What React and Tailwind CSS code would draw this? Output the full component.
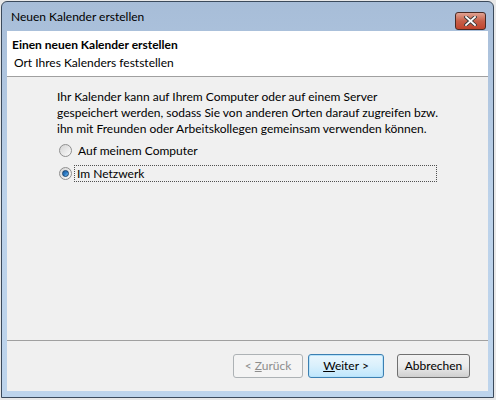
import React from 'react'

const font = { fontFamily: 'Lato, "Noto Sans", sans-serif' }

function Radio({ checked }) {
    return (
        <span className="relative w-[13px] h-[13px] rounded-full border border-[#8f8f8f] bg-gradient-to-br from-[#d4d4d4] to-[#fbfbfb] flex items-center justify-center shrink-0">
            {checked && (
                <span className="w-[7px] h-[7px] rounded-full bg-gradient-to-br from-[#1d5f9e] via-[#2b7ac6] to-[#7ec8f6] border border-[#13406e]" />
            )}
        </span>
    )
}

function Button({ children, disabled, primary }) {
    let cls = 'h-[24px] rounded-[3px] border text-[12px] flex items-center justify-center '
    if (disabled) cls += 'border-[#adb2b5] bg-[#f4f4f4] text-[#8d8d8d]'
    else if (primary) cls += 'border-[#3c7fb1] bg-gradient-to-b from-[#eaf6fd] via-[#d9f0fc] to-[#bee6fd] text-black shadow-[inset_0_0_0_1px_#b7e3fb]'
    else cls += 'border-[#707070] bg-gradient-to-b from-[#f2f2f2] via-[#ebebeb] to-[#cfcfcf] text-black'
    return <div className={cls}><span>{children}</span></div>
}

export default function App() {
    return (
        <div className="w-[496px] h-[400px] bg-[#e8e8e8] overflow-hidden" style={font}>
            <div className="ml-[1px] mt-[1px] w-[493px] h-[397px] border border-[#3b4a5c] rounded-t-[6px] bg-gradient-to-b from-[#a7bdd8] via-[#bcd2ea] to-[#bdd4ec] flex flex-col">
                {/* title bar */}
                <div className="h-[29px] flex items-start pl-[9px] pr-[7px] shrink-0">
                    <span className="text-[12px] text-black mt-[8px] leading-[14px]">Neuen Kalender erstellen</span>
                    <div className="ml-auto mt-[10px] w-[31px] h-[18px] rounded-[3px] border border-[#4a2a24] bg-gradient-to-b from-[#e0a292] via-[#c75f48] to-[#c1442c] flex items-center justify-center">
                        <svg width="13" height="10" viewBox="0 0 13 10">
                            <path d="M2 1 L11 9 M11 1 L2 9" stroke="#3a3a3a" strokeWidth="3.6" strokeLinecap="square" />
                            <path d="M2 1 L11 9 M11 1 L2 9" stroke="#ffffff" strokeWidth="1.8" strokeLinecap="square" />
                        </svg>
                    </div>
                </div>
                {/* client area */}
                <div className="ml-[5px] w-[481px] h-[360px] bg-[#f0f0f0] flex flex-col">
                    <div className="h-[45px] bg-white pl-[5px] pt-[6px] shrink-0">
                        <div className="text-[12px] font-bold leading-[15px] text-black">Einen neuen Kalender erstellen</div>
                        <div className="text-[12px] leading-[15px] text-black pl-[2px] mt-[3px]">Ort Ihres Kalenders feststellen</div>
                    </div>
                    <div className="h-[1px] bg-[#a0a0a0] shrink-0" />
                    <div className="h-[263px] pl-[50px] pt-[12px] shrink-0">
                        <p className="text-[12px] leading-[16px] text-black">
                            Ihr Kalender kann auf Ihrem Computer oder auf einem Server<br />
                            gespeichert werden, sodass Sie von anderen Orten darauf zugreifen bzw.<br />
                            ihn mit Freunden oder Arbeitskollegen gemeinsam verwenden können.
                        </p>
                        <div className="flex items-center gap-[6px] mt-[5px] pl-[2px] h-[17px]">
                            <Radio />
                            <span className="text-[12px] leading-[15px] text-black">Auf meinem Computer</span>
                        </div>
                        <div className="flex items-center gap-[2px] mt-[6px] pl-[2px] h-[17px]">
                            <Radio checked />
                            <span className="w-[363px] h-[17px] border border-dotted border-[#505050] text-[12px] leading-[15px] text-black pl-[2px]">Im Netzwerk</span>
                        </div>
                    </div>
                    <div className="h-[1px] bg-[#a0a0a0] shrink-0" />
                    <div className="flex pt-[13px] pl-[226px]">
                        <div className="w-[70px]"><Button disabled>&lt; <u>Z</u>urück</Button></div>
                        <div className="w-[76px] ml-[5px]"><Button primary><u>W</u>eiter &gt;</Button></div>
                        <div className="w-[73px] ml-[13px]"><Button>Abbrechen</Button></div>
                    </div>
                </div>
            </div>
        </div>
    )
}
